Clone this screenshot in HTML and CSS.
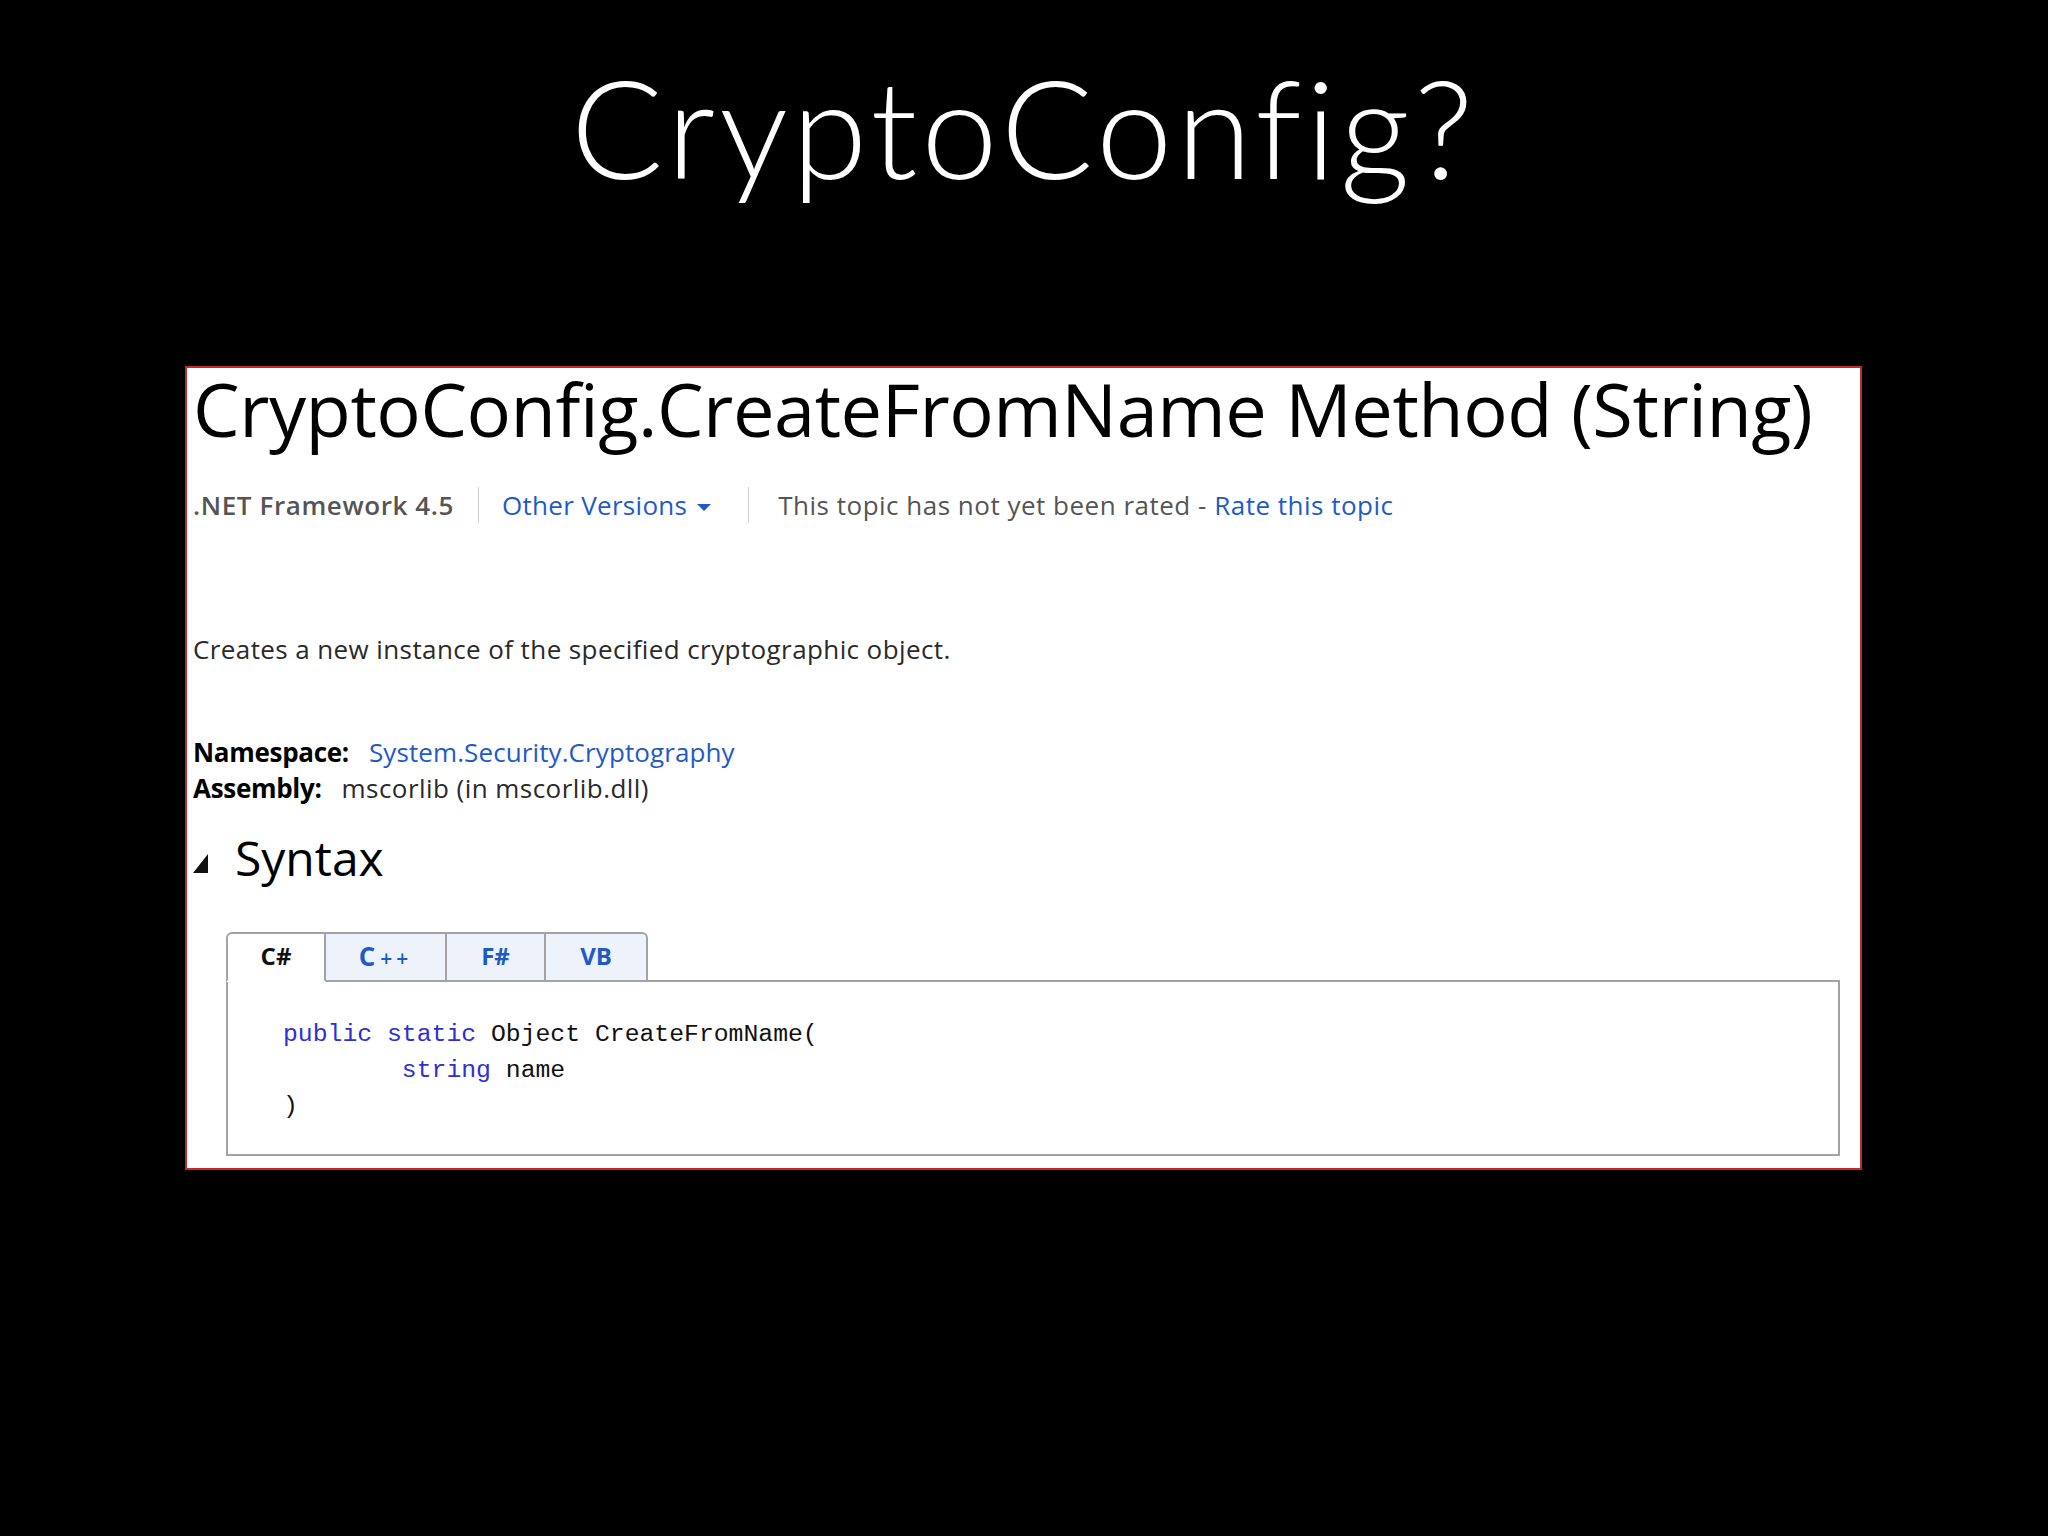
FILE: index.html
```html
<!DOCTYPE html>
<html lang="en">
<head>
<meta charset="utf-8">
<title>CryptoConfig?</title>
<link rel="stylesheet" href="styles.css">
</head>
<body>
<div class="slide">
  <h1 class="slide-title">CryptoConfig?</h1>
  <div class="panel">
    <h2 class="doc-title">CryptoConfig.CreateFromName Method (String)</h2>
    <div class="meta">
      <span class="fw">.NET Framework 4.5</span>
      <span class="sep sep-1"></span>
      <span class="link versions">Other Versions<svg class="caret" width="16" height="9" viewBox="0 0 16 9"><path d="M1 1 L15 1 L8 8 Z" fill="#1f5bc6"/></svg></span>
      <span class="sep sep-2"></span>
      <span class="rating">This topic has not yet been rated - <span class="link">Rate this topic</span></span>
    </div>
    <p class="desc">Creates a new instance of the specified cryptographic object.</p>
    <div class="info">
      <div class="info-row"><span class="label">Namespace:</span><span class="link ns">System.Security.Cryptography</span></div>
      <div class="info-row"><span class="label">Assembly:</span><span class="value">mscorlib (in mscorlib.dll)</span></div>
    </div>
    <h3 class="syntax"><svg class="toggle" width="15" height="19" viewBox="0 0 15 19"><path d="M15 0 L15 19 L0 19 Z" fill="#111"/></svg><span>Syntax</span></h3>
    <div class="code-block">
      <div class="tabs">
        <div class="tab tab-active tab-cs">C#</div>
        <div class="tab tab-cpp">C<span class="plus">++</span></div>
        <div class="tab tab-fs">F#</div>
        <div class="tab tab-vb">VB</div>
      </div>
      <pre class="code"><span class="kw">public</span> <span class="kw">static</span> Object CreateFromName(
        <span class="kw">string</span> name
)</pre>
    </div>
  </div>
</div>
</body>
</html>
```
FILE: styles.css
```css
* { box-sizing: border-box; }
html, body {
  margin: 0;
  padding: 0;
  background: #000;
}
.slide {
  width: 2048px;
  height: 1536px;
  background: #000;
  overflow: hidden;
}
.slide-title {
  margin: 44px 0 0;
  font-family: Lato, "Open Sans", sans-serif;
  font-weight: 300;
  font-size: 137px;
  line-height: 164px;
  letter-spacing: 4px;
  color: #fff;
  text-align: center;
}
.panel {
  margin: 158px 0 0 185px;
  width: 1677px;
  height: 804px;
  background: #fff;
  border: 2px solid #c9252c;
  padding: 0 0 0 6px;
  font-family: "Open Sans", "Noto Sans", sans-serif;
  color: #2a2a2a;
}
.doc-title {
  margin: 1px 0 0;
  font-size: 74px;
  font-weight: 400;
  line-height: 80px;
  letter-spacing: -0.45px;
  color: #000;
  white-space: nowrap;
}
.meta {
  margin-top: 38px;
  display: flex;
  align-items: center;
  height: 36px;
  font-size: 26px;
  line-height: 36px;
  letter-spacing: 0.5px;
  white-space: nowrap;
}
.fw {
  font-weight: 600;
  color: #555;
  letter-spacing: 0.6px;
}
.sep {
  width: 1px;
  height: 36px;
  background: #cfcfcf;
}
.sep-1 { margin: 0 23px 0 24px; }
.sep-2 { margin: 0 29px 0 36px; }
.link { color: #1f5bc6; }
.versions {
  display: flex;
  align-items: center;
  letter-spacing: 0.3px;
}
.caret { margin-left: 9px; margin-top: 4px; }
.rating { color: #555; letter-spacing: 0.5px; }
.desc {
  margin: 108px 0 0;
  font-size: 26px;
  line-height: 36px;
  letter-spacing: 0.4px;
}
.info {
  margin-top: 67px;
  font-size: 26px;
  line-height: 36px;
  letter-spacing: 0.3px;
}
.label {
  font-weight: 700;
  color: #000;
  margin-right: 20px;
  letter-spacing: -0.3px;
}
.ns { letter-spacing: 0.1px; }
.value { color: #2a2a2a; letter-spacing: 0.45px; }
.syntax {
  margin: 24px 0 0;
  display: flex;
  align-items: center;
  font-size: 48px;
  font-weight: 400;
  line-height: 56px;
  color: #000;
}
.toggle {
  margin-right: 27px;
  margin-top: 10px;
}
.code-block {
  margin: 46px 20px 0 33px;
}
.tabs {
  display: flex;
  position: relative;
  z-index: 1;
  margin-bottom: -2px;
}
.tab {
  height: 50px;
  border-top: 2px solid #a3a3a3;
  border-right: 2px solid #a3a3a3;
  border-bottom: 2px solid #a3a3a3;
  background: #eef3fb;
  font-size: 24px;
  font-weight: 700;
  color: #1f5bc6;
  text-align: center;
  line-height: 44px;
}
.tab-active {
  background: #fff;
  border-left: 2px solid #a3a3a3;
  border-bottom-color: #fff;
  border-top-left-radius: 6px;
  color: #111;
}
.tab-cs { width: 100px; }
.tab-cpp { width: 121px; }
.tab-fs { width: 99px; }
.tab-vb { width: 102px; border-top-right-radius: 6px; }
.tab-cpp { font-size: 26px; }
.plus {
  font-size: 21px;
  font-weight: 600;
  margin-left: 5px;
  letter-spacing: 4px;
}
.code {
  margin: 0;
  height: 176px;
  border: 2px solid #a3a3a3;
  padding: 34px 0 0 55px;
  font-family: "Liberation Mono", "DejaVu Sans Mono", monospace;
  font-size: 24.75px;
  line-height: 36px;
  color: #111;
  background: #fff;
}
.kw { color: #2f2fd6; }
```
